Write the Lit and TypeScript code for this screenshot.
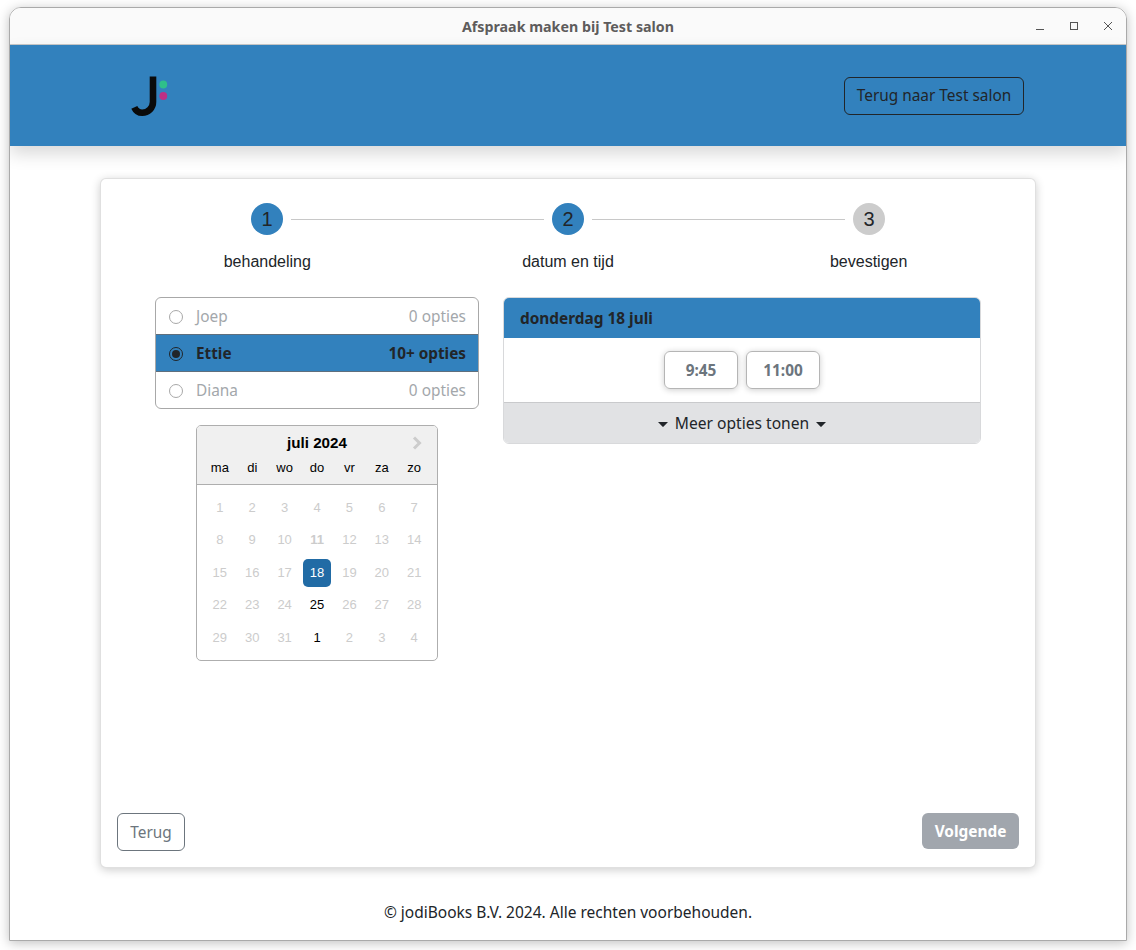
import { LitElement, html, css, svg } from "lit";
import { customElement } from "lit/decorators.js";

const caret = svg`<svg class="caret" width="10" height="5" viewBox="0 0 10 5"><path d="M0 0h10L5.6 4.6a.8.8 0 0 1-1.2 0z" fill="#212529"/></svg>`;

@customElement("app-root")
export class AppRoot extends LitElement {
  static styles = css`
    :host { display: block; height: 950px; padding: 7px 9px 9px; box-sizing: border-box; background: #fff; font-family: "Noto Sans", sans-serif; color: #212529; font-size: 15.4px; }
    * { box-sizing: border-box; }
    .window { height: 934px; border: 1px solid #aaa; border-radius: 12px 12px 0 0; background: #fff; display: flex; flex-direction: column; overflow: hidden; }
    .shell { height: 934px; border-radius: 12px 12px 0 0; box-shadow: 0 2px 12px rgba(0,0,0,.25); }
    .titlebar { height: 37px; flex: none; background: #fafafa; border-bottom: 1px solid #c8c8c8; display: grid; grid-template-columns: 1fr auto 1fr; align-items: center; }
    .title { grid-column: 2; font-weight: 700; font-size: 14.25px; color: #5e5c5c; }
    .controls { grid-column: 3; justify-self: end; display: flex; gap: 26px; padding-right: 14px; }
    .controls svg { display: block; }
    .top { flex: none; height: 101px; background: #3281bd; display: flex; align-items: center; justify-content: space-between; padding: 0 102px 0 121px; box-shadow: 0 8px 16px rgba(0,0,0,.15); position: relative; }
    .logo { display: block; }
    .outline { height: 38px; width: 180px; border: 1px solid #212529; border-radius: 6px; display: flex; align-items: center; justify-content: center; font-size: 15.4px; color: #212529; }
    .main { flex: 1; display: flex; flex-direction: column; padding: 32px 90px 0; min-height: 0; }
    .card { flex: 1; border: 1px solid rgba(0,0,0,.12); border-radius: 6px; background: #fff; box-shadow: 0 2px 10px rgba(0,0,0,.2); padding: 24px 16px 16px; display: flex; flex-direction: column; }
    .steps { display: flex; align-items: center; padding: 0 134px; }
    .circle { width: 32px; height: 32px; flex: none; border-radius: 50%; background: #3281bd; display: flex; align-items: center; justify-content: center; font: 20px "Liberation Sans", sans-serif; color: #212529; }
    .circle.off { background: #ccc; }
    .line { flex: 1; height: 1px; background: #c8c8c8; margin: 0 8px; }
    .labels { display: grid; grid-template-columns: repeat(3, 1fr); margin-top: 17px; font: 16px/20px "Liberation Sans", sans-serif; color: #212529; }
    .labels span { text-align: center; }
    .columns { display: flex; gap: 24px; padding: 0 38px; margin-top: 25px; align-items: flex-start; }
    .left { width: 324px; flex: none; display: flex; flex-direction: column; align-items: center; gap: 16px; }
    .right { width: 478px; flex: none; }
    .list { width: 100%; border: 1px solid #a8a8a8; border-radius: 6px; overflow: hidden; }
    .opt { height: 36px; display: flex; align-items: center; justify-content: space-between; padding: 0 12px 0 13px; color: #a3a7ab; }
    .opt .name { display: flex; align-items: center; gap: 13px; }
    .opt.on { height: 38px; background: #3281bd; border-top: 1px solid #5f6f7d; border-bottom: 1px solid #5f6f7d; color: #212529; font-weight: 700; font-size: 15.3px; }
    .radio { width: 14px; height: 14px; border-radius: 50%; border: 1.5px solid #a8a8a8; background: #fff; margin-top: 1px; flex: none; }
    .on .radio { border-color: #212529; background: #3281bd; display: flex; align-items: center; justify-content: center; }
    .on .radio::after { content: ""; width: 8px; height: 8px; border-radius: 50%; background: #212529; }
    .cal { width: 242px; height: 236px; border: 1px solid #aeaeae; border-radius: 5px; overflow: hidden; font-family: "Liberation Sans", sans-serif; }
    .cal-head { height: 59px; background: #f0f0f0; border-bottom: 1px solid #aeaeae; position: relative; padding-top: 8px; }
    .month { text-align: center; font-weight: 700; font-size: 15.2px; line-height: 18px; color: #000; }
    .next { position: absolute; right: 15px; top: 10px; display: block; }
    .grid { display: grid; grid-template-columns: repeat(7, 28px); column-gap: 4.4px; justify-content: center; }
    .names { margin-top: 7px; font-size: 13px; line-height: 18px; text-align: center; color: #000; }
    .days { row-gap: 4.4px; margin-top: 9px; font-size: 13px; text-align: center; color: #ccc; }
    .days span { height: 28px; line-height: 28px; border-radius: 5px; }
    .days .b { font-weight: 700; }
    .days .sel { background: #216ba5; color: #fff; }
    .days .av { color: #000; }
    .panel { border: 1px solid #d8d9db; border-radius: 6px; overflow: hidden; }
    .ph { height: 40px; background: #3281bd; padding: 0 16px; display: flex; align-items: center; font-weight: 700; color: #212529; }
    .times { height: 64px; display: flex; justify-content: center; gap: 8px; padding-top: 13px; }
    .time { width: 74px; height: 38px; border: 1px solid #b5b5b5; border-radius: 6px; display: flex; align-items: center; justify-content: center; font-weight: 700; color: #6c757d; box-shadow: 0 1px 6px rgba(0,0,0,.2); }
    .more { height: 41px; background: #e1e2e4; border-top: 1px solid #c9cacc; display: flex; align-items: center; justify-content: center; gap: 7px; color: #212529; }
    .more span { font-size: 15.6px; }
    .caret { display: block; margin-top: 3px; }
    .nav { margin-top: auto; display: flex; justify-content: space-between; align-items: flex-start; }
    .back { height: 38px; width: 68px; border: 1px solid #6c757d; border-radius: 6px; display: flex; align-items: center; justify-content: center; color: #6c757d; }
    .go { height: 36px; width: 97px; border-radius: 6px; background: #a1a6ad; color: #fff; font-weight: 700; display: flex; align-items: center; justify-content: center; }
    .foot { height: 72px; flex: none; display: flex; align-items: center; justify-content: center; padding-top: 16px; color: #212529; font-size: 15.5px; }
  `;

  render() {
    const names = ["ma", "di", "wo", "do", "vr", "za", "zo"];
    const days: [string, string][] = [];
    for (let d = 1; d <= 31; d++) {
      const c = d === 18 ? "sel" : d === 25 ? "av" : d === 11 ? "b" : "";
      days.push([String(d), c]);
    }
    days.push(["1", "av"], ["2", ""], ["3", ""], ["4", ""]);
    return html`
      <div class="shell"><div class="window">
        <div class="titlebar">
          <div class="title">Afspraak maken bij Test salon</div>
          <div class="controls">
            <svg width="8" height="8" viewBox="0 0 8 8"><path d="M0 7.5h8" stroke="#555" fill="none"/></svg>
            <svg width="8" height="8" viewBox="0 0 8 8"><rect x=".5" y=".5" width="7" height="7" stroke="#555" fill="none"/></svg>
            <svg width="8" height="8" viewBox="0 0 8 8"><path d="M0 0l8 8M8 0L0 8" stroke="#555" fill="none"/></svg>
          </div>
        </div>
        <div class="top">
          <svg class="logo" width="40" height="44" viewBox="0 0 40 44">
            <path d="M22 2.5V28a10.8 10.8 0 0 1-10.8 10.8c-4 0-6.2-1.6-7.9-5.4" stroke="#0a0a0a" stroke-width="6.6" fill="none"/>
            <circle cx="32.3" cy="10.5" r="3.9" fill="#2fbf8a"/>
            <circle cx="32.3" cy="22" r="3.9" fill="#bb2f85"/>
          </svg>
          <div class="outline">Terug naar Test salon</div>
        </div>
        <div class="main">
          <div class="card">
            <div class="steps">
              <div class="circle">1</div><div class="line"></div>
              <div class="circle">2</div><div class="line"></div>
              <div class="circle off">3</div>
            </div>
            <div class="labels"><span>behandeling</span><span>datum en tijd</span><span>bevestigen</span></div>
            <div class="columns">
              <div class="left">
                <div class="list">
                  <div class="opt"><span class="name"><i class="radio"></i>Joep</span><span>0 opties</span></div>
                  <div class="opt on"><span class="name"><i class="radio"></i>Ettie</span><span>10+ opties</span></div>
                  <div class="opt"><span class="name"><i class="radio"></i>Diana</span><span>0 opties</span></div>
                </div>
                <div class="cal">
                  <div class="cal-head">
                    <div class="month">juli 2024</div>
                    <svg class="next" width="10" height="14" viewBox="0 0 10 14"><path d="M2 1.5l5.5 5.5L2 12.5" stroke="#ccc" stroke-width="3" fill="none"/></svg>
                    <div class="grid names">${names.map((n) => html`<span>${n}</span>`)}</div>
                  </div>
                  <div class="grid days">${days.map(([d, c]) => html`<span class=${c}>${d}</span>`)}</div>
                </div>
              </div>
              <div class="right">
                <div class="panel">
                  <div class="ph">donderdag 18 juli</div>
                  <div class="times"><div class="time">9:45</div><div class="time">11:00</div></div>
                  <div class="more">${caret}<span>Meer opties tonen</span>${caret}</div>
                </div>
              </div>
            </div>
            <div class="nav"><div class="back">Terug</div><div class="go">Volgende</div></div>
          </div>
        </div>
        <div class="foot">© jodiBooks B.V. 2024. Alle rechten voorbehouden.</div>
      </div></div>
    `;
  }
}
